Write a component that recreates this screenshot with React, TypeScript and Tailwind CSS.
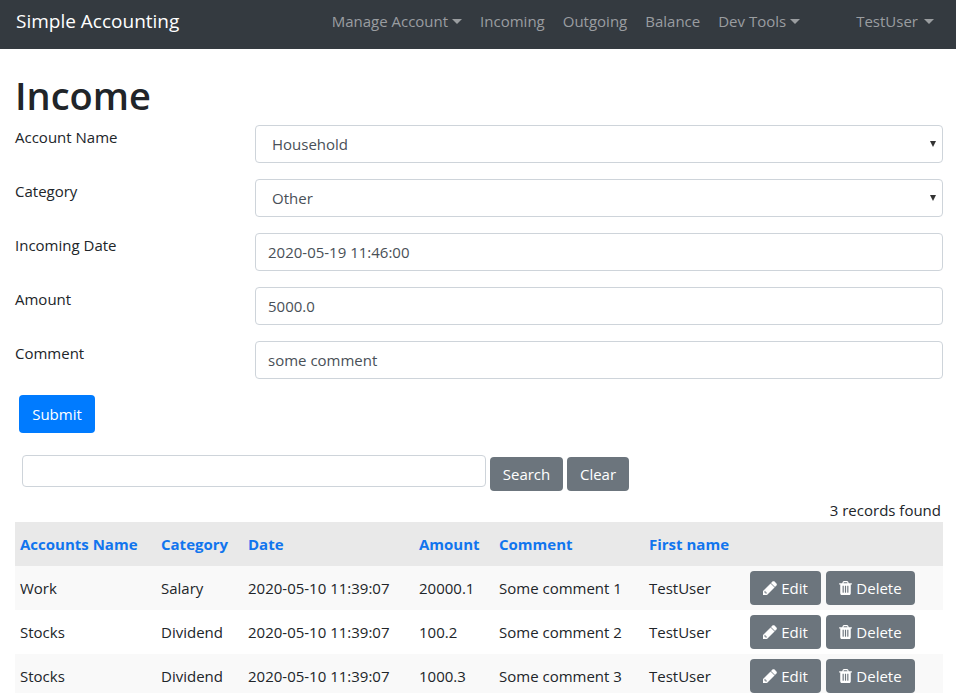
import type { ReactNode } from "react";

const records = [
  { account: "Work", category: "Salary", date: "2020-05-10 11:39:07", amount: "20000.1", comment: "Some comment 1", user: "TestUser" },
  { account: "Stocks", category: "Dividend", date: "2020-05-10 11:39:07", amount: "100.2", comment: "Some comment 2", user: "TestUser" },
  { account: "Stocks", category: "Dividend", date: "2020-05-10 11:39:07", amount: "1000.3", comment: "Some comment 3", user: "TestUser" },
];

const columns = ["Accounts Name", "Category", "Date", "Amount", "Comment", "First name"];

function Caret() {
  return (
    <svg viewBox="0 0 10 5" className="h-[5px] w-[10px]" fill="currentColor" aria-hidden="true">
      <path d="M0 0h10L5 5z" />
    </svg>
  );
}

function PencilIcon() {
  return (
    <svg viewBox="0 0 1536 1536" className="size-[14px]" fill="currentColor" stroke="currentColor" strokeWidth="40" aria-hidden="true">
      <path d="M363 1408l91-91-235-235-91 91v107h128v128h107zM832 288l416 416-832 832h-416v-416zM1515 384q0 53-37 90l-166 166-416-416 166-165q36-38 90-38 53 0 91 38l235 234q37 39 37 91z" />
    </svg>
  );
}

function TrashIcon() {
  return (
    <svg viewBox="0 0 1408 1536" className="h-[14px] w-[13px]" fill="currentColor" aria-hidden="true">
      <path d="M512 1248v-704q0-14-9-23t-23-9h-64q-14 0-23 9t-9 23v704q0 14 9 23t23 9h64q14 0 23-9t9-23zM768 1248v-704q0-14-9-23t-23-9h-64q-14 0-23 9t-9 23v704q0 14 9 23t23 9h64q14 0 23-9t9-23zM1024 1248v-704q0-14-9-23t-23-9h-64q-14 0-23 9t-9 23v704q0 14 9 23t23 9h64q14 0 23-9t9-23zM480 256h448l-48-117q-7-9-17-11h-317q-10 2-17 11zM1408 288v64q0 14-9 23t-23 9h-96v948q0 83-47 143.500t-113 60.500h-832q-66 0-113-58.500t-47-141.500v-952h-96q-14 0-23-9t-9-23v-64q0-14 9-23t23-9h309l70-167q15-37 54-63t79-26h320q40 0 79 26t54 63l70 167h309q14 0 23 9t9 23z" />
    </svg>
  );
}

function Field({ id, label, children }: { id: string; label: string; children: ReactNode }) {
  return (
    <div className="grid grid-cols-[240px_1fr] items-start">
      <label htmlFor={id}>{label}</label>
      {children}
    </div>
  );
}

function SelectField({ id, label, value }: { id: string; label: string; value: string }) {
  return (
    <Field id={id} label={label}>
      <div className="relative">
        <select
          id={id}
          defaultValue={value}
          className="block h-[38px] w-full appearance-none rounded border border-[#ced4da] bg-white px-4 text-[#495057]"
        >
          <option>{value}</option>
        </select>
        <svg viewBox="0 0 6 6" className="pointer-events-none absolute top-4 right-[7px] size-[6px]" fill="#333" aria-hidden="true">
          <path d="M0 0h6L3 6z" />
        </svg>
      </div>
    </Field>
  );
}

function TextField({ id, label, value }: { id: string; label: string; value: string }) {
  return (
    <Field id={id} label={label}>
      <input
        id={id}
        type="text"
        defaultValue={value}
        className="h-[38px] w-full rounded border border-[#ced4da] bg-white px-3 text-[#495057]"
      />
    </Field>
  );
}

function NavLink({ children, caret }: { children: string; caret?: boolean }) {
  return (
    <a href="#" className="flex items-center gap-1 px-2">
      {children}
      {caret && <Caret />}
    </a>
  );
}

export default function App() {
  return (
    <div className="min-h-screen bg-white font-['Open_Sans','Noto_Sans',sans-serif] text-[15px] leading-6 text-[#212529]">
      <nav className="flex h-[49px] items-start bg-[#343a40] pt-[9px] pr-[14px] pl-4 whitespace-nowrap text-[#9a9da0]">
        <a href="#" className="text-[19px] text-white">Simple Accounting</a>
        <div className="ml-auto flex gap-[2px]">
          <NavLink caret>Manage Account</NavLink>
          <NavLink>Incoming</NavLink>
          <NavLink>Outgoing</NavLink>
          <NavLink>Balance</NavLink>
          <NavLink caret>Dev Tools</NavLink>
        </div>
        <a href="#" className="ml-10 flex items-center gap-[6px] px-2">
          TestUser
          <Caret />
        </a>
      </nav>

      <main className="pt-[22px] pr-[13px] pl-[15px]">
        <h1 className="mb-[6px] text-[38px] leading-[48px] font-semibold">Income</h1>

        <form onSubmit={(e) => e.preventDefault()}>
          <div className="flex flex-col gap-4">
            <SelectField id="account" label="Account Name" value="Household" />
            <SelectField id="category" label="Category" value="Other" />
            <TextField id="date" label="Incoming Date" value="2020-05-19 11:46:00" />
            <TextField id="amount" label="Amount" value="5000.0" />
            <TextField id="comment" label="Comment" value="some comment" />
          </div>
          <button type="submit" className="mt-4 ml-1 h-[38px] w-[76px] rounded bg-[#007bff] text-white">
            Submit
          </button>
        </form>

        <form className="mt-[22px] flex items-start gap-1 px-[7px]" onSubmit={(e) => e.preventDefault()}>
          <input
            type="search"
            aria-label="Search records"
            className="h-8 w-[464px] rounded border border-[#ced4da] bg-white px-2 text-[#495057]"
          />
          <button type="submit" className="mt-[2px] h-[34px] w-[73px] rounded bg-[#6c757d] text-white">Search</button>
          <button type="reset" className="mt-[2px] h-[34px] w-[62px] rounded bg-[#6c757d] text-white">Clear</button>
        </form>

        <p className="mt-[7px] pr-[2px] text-right">3 records found</p>

        <table className="w-full table-fixed border-collapse text-left">
          <colgroup>
            <col className="w-[141px]" />
            <col className="w-[87px]" />
            <col className="w-[171px]" />
            <col className="w-[80px]" />
            <col className="w-[150px]" />
            <col className="w-[101px]" />
            <col />
          </colgroup>
          <thead>
            <tr className="h-11 bg-[#e9e9e9] whitespace-nowrap">
              {columns.map((name) => (
                <th key={name} scope="col" className="px-[5px] font-bold">
                  <a href="#" className="text-[#1175ee]">{name}</a>
                </th>
              ))}
              <td />
            </tr>
          </thead>
          <tbody>
            {records.map((r) => (
              <tr key={r.comment} className="h-11 whitespace-nowrap odd:bg-[#f9f9f9]">
                <td className="px-[5px]">{r.account}</td>
                <td className="px-[5px]">{r.category}</td>
                <td className="px-[5px]">{r.date}</td>
                <td className="px-[5px]">{r.amount}</td>
                <td className="px-[5px]">{r.comment}</td>
                <td className="px-[5px]">{r.user}</td>
                <td className="px-[5px]">
                  <div className="flex gap-[5px]">
                    <button type="button" className="flex h-[34px] w-[71px] items-center justify-center gap-1 rounded bg-[#6c757d] text-white">
                      <PencilIcon />
                      Edit
                    </button>
                    <button type="button" className="flex h-[34px] w-[89px] items-center justify-center gap-1 rounded bg-[#6c757d] text-white">
                      <TrashIcon />
                      Delete
                    </button>
                  </div>
                </td>
              </tr>
            ))}
          </tbody>
        </table>
      </main>
    </div>
  );
}
